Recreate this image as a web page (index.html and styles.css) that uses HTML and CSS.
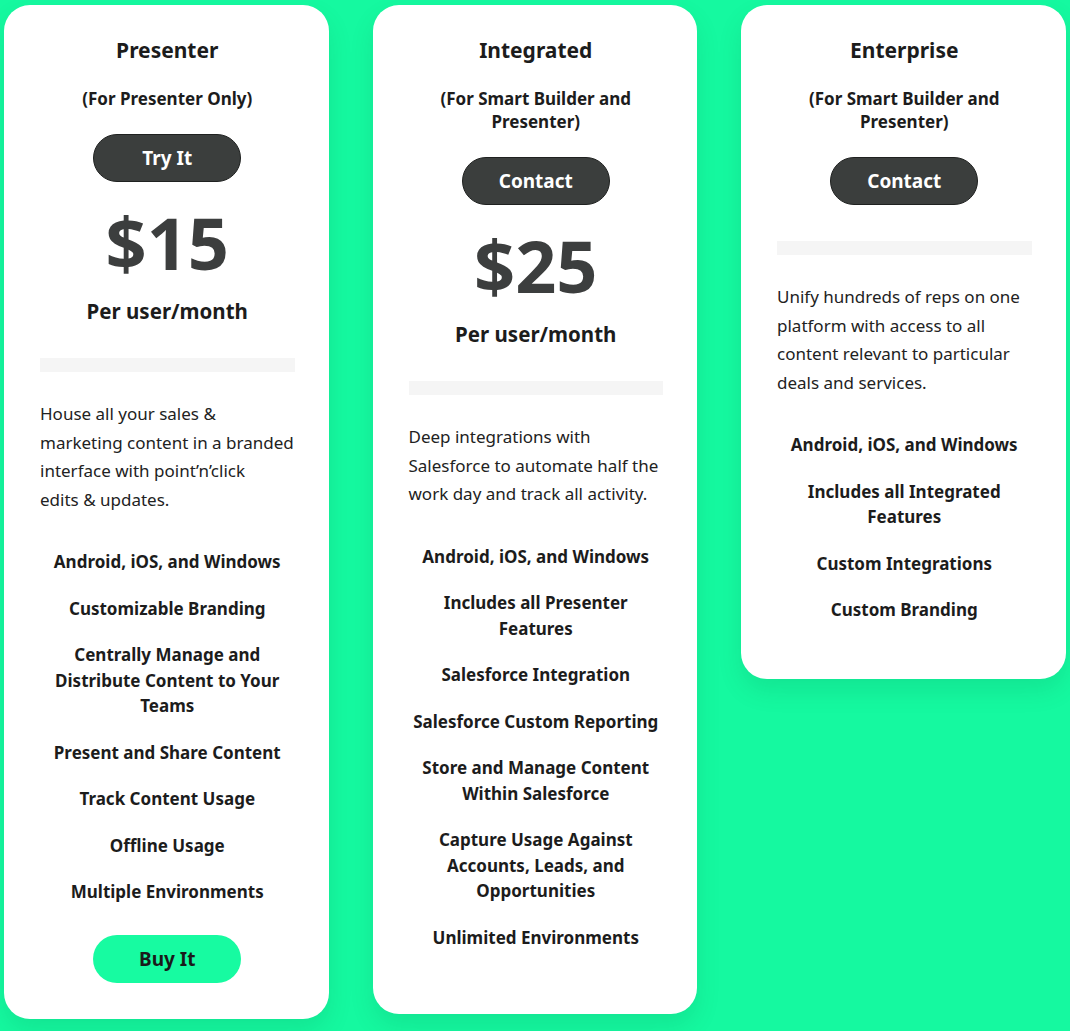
FILE: index.html
```html
<!DOCTYPE html>
<html lang="en">
<head>
<meta charset="utf-8">
<title>Pricing</title>
<link rel="stylesheet" href="styles.css">
</head>
<body>
<main class="plans">
  <section class="card card--presenter">
    <h2 class="card__title">Presenter</h2>
    <p class="card__sub">(For Presenter Only)</p>
    <a class="btn btn--dark" href="#">Try It</a>
    <div class="card__price">$15</div>
    <div class="card__per">Per user/month</div>
    <div class="card__bar"></div>
    <p class="card__desc">House all your sales &amp; marketing content in a branded interface with point’n’click edits&nbsp;&amp; updates.</p>
    <ul class="features">
      <li>Android, iOS, and Windows</li>
      <li>Customizable Branding</li>
      <li>Centrally Manage and Distribute Content to Your Teams</li>
      <li>Present and Share Content</li>
      <li>Track Content Usage</li>
      <li>Offline Usage</li>
      <li>Multiple Environments</li>
    </ul>
    <a class="btn btn--green" href="#">Buy It</a>
  </section>

  <section class="card card--integrated">
    <h2 class="card__title">Integrated</h2>
    <p class="card__sub">(For Smart Builder and Presenter)</p>
    <a class="btn btn--dark" href="#">Contact</a>
    <div class="card__price">$25</div>
    <div class="card__per">Per user/month</div>
    <div class="card__bar"></div>
    <p class="card__desc">Deep integrations with Salesforce to automate half the work day and track all activity.</p>
    <ul class="features">
      <li>Android, iOS, and Windows</li>
      <li>Includes all Presenter Features</li>
      <li>Salesforce Integration</li>
      <li>Salesforce Custom Reporting</li>
      <li>Store and Manage Content Within Salesforce</li>
      <li>Capture Usage Against Accounts, Leads, and Opportunities</li>
      <li>Unlimited Environments</li>
    </ul>
  </section>

  <section class="card card--enterprise">
    <h2 class="card__title">Enterprise</h2>
    <p class="card__sub">(For Smart Builder and Presenter)</p>
    <a class="btn btn--dark" href="#">Contact</a>
    <div class="card__bar"></div>
    <p class="card__desc">Unify hundreds of reps on one platform with access to all content relevant to particular deals and services.</p>
    <ul class="features">
      <li>Android, iOS, and Windows</li>
      <li>Includes all Integrated Features</li>
      <li>Custom Integrations</li>
      <li>Custom Branding</li>
    </ul>
  </section>
</main>
</body>
</html>
```

FILE: styles.css
```css
* { box-sizing: border-box; }

html, body {
  margin: 0;
  padding: 0;
}

body {
  background: #15f9a0;
  font-family: "Noto Sans", "Open Sans", sans-serif;
  color: #1c1c1c;
  min-height: 1031px;
}

.plans {
  display: flex;
  align-items: flex-start;
  gap: 44px;
  padding: 5px 4px;
}

.card {
  width: 324.5px;
  flex: none;
  background: #fff;
  border-radius: 26px;
  padding: 31px 34px 36px 36px;
  display: flex;
  flex-direction: column;
  align-items: stretch;
  box-shadow: 0 12px 24px rgba(0, 90, 50, 0.12);
}

.card__title {
  margin: 0;
  font-size: 21px;
  line-height: 28px;
  font-weight: 700;
  text-align: center;
}

.card__sub {
  margin: 23px 8px 0;
  font-size: 17px;
  line-height: 23px;
  font-weight: 700;
  text-align: center;
}

.btn {
  display: flex;
  align-items: center;
  justify-content: center;
  align-self: center;
  width: 148px;
  height: 48px;
  border-radius: 24px;
  font-size: 19px;
  font-weight: 700;
  text-decoration: none;
}

.btn--dark {
  margin-top: 24px;
  background: #3b3e3d;
  border: 1px solid #1f2120;
  color: #fff;
}

.btn--green {
  margin-top: 30px;
  background: #17fba1;
  color: #1a1a1a;
}

.card__price {
  margin-top: 24px;
  font-size: 72px;
  line-height: 72px;
  font-weight: 700;
  text-align: center;
  color: #3c3e3e;
}

.card__per {
  margin-top: 19px;
  font-size: 20.5px;
  line-height: 28px;
  font-weight: 700;
  text-align: center;
}

.card__bar {
  margin-top: 33px;
  height: 14px;
  background: #f5f5f5;
}

.btn--dark + .card__bar {
  margin-top: 36px;
}

.card__desc {
  margin: 28px 0 0;
  font-size: 17px;
  line-height: 28.5px;
  color: #222;
}

.features {
  list-style: none;
  margin: 35px 0 0;
  padding: 0;
  display: flex;
  flex-direction: column;
  gap: 21px;
}

.features li {
  font-size: 17px;
  line-height: 25.5px;
  font-weight: 700;
  text-align: center;
}

.card--integrated .features {
  margin-bottom: 28px;
}

.card--enterprise .features {
  margin-bottom: 20px;
}
```
